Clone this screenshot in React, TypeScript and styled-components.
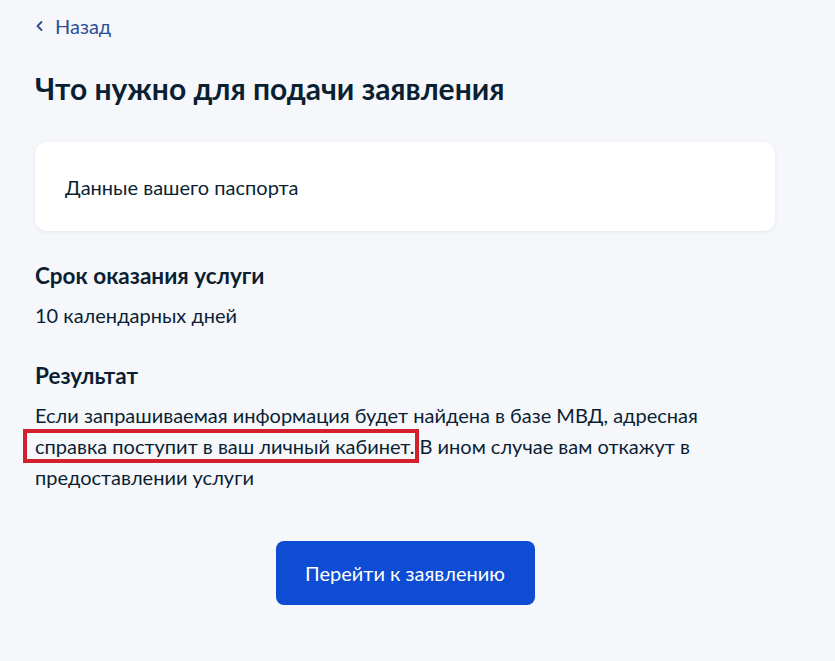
import React from 'react'
import styled, { createGlobalStyle } from 'styled-components'

const GlobalStyle = createGlobalStyle`
    html, body {
        margin: 0;
        padding: 0;
        background: #f5f7fb;
    }
    body {
        font-family: Lato, 'Noto Sans', sans-serif;
        color: #0b1f33;
    }
`

export default function App() {
    return (
        <>
            <GlobalStyle />
            <Page>
                <BackLink href="#">
                    <svg width="10" height="12" viewBox="0 0 10 12" fill="none">
                        <path d="M6.5 2L2.5 6L6.5 10" stroke="currentColor" strokeWidth="1.8" strokeLinecap="round" strokeLinejoin="round" />
                    </svg>
                    Назад
                </BackLink>
                <Title>Что нужно для подачи заявления</Title>
                <Card>Данные вашего паспорта</Card>
                <Section>
                    <SectionTitle>Срок оказания услуги</SectionTitle>
                    <Text>10 календарных дней</Text>
                </Section>
                <Section>
                    <SectionTitle>Результат</SectionTitle>
                    <Text>
                        Если запрашиваемая информация будет найдена в базе МВД, адресная{' '}
                        <Marked>справка поступит в ваш личный кабинет.</Marked> В ином случае вам откажут в
                        предоставлении услуги
                    </Text>
                </Section>
                <Actions>
                    <PrimaryButton>Перейти к заявлению</PrimaryButton>
                </Actions>
            </Page>
        </>
    )
}

const Page = styled.div`
    width: 740px;
    padding: 12px 34px 40px 35px;
    display: flex;
    flex-direction: column;
`

const BackLink = styled.a`
    display: inline-flex;
    align-items: center;
    gap: 10px;
    align-self: flex-start;
    color: #2d4f98;
    font-size: 20px;
    line-height: 28px;
    text-decoration: none;
`

const Title = styled.h1`
    margin: 30px 0 0;
    font-size: 30px;
    line-height: 36px;
    font-weight: 700;
`

const Card = styled.div`
    margin-top: 36px;
    height: 89px;
    box-sizing: border-box;
    padding: 0 30px;
    display: flex;
    align-items: center;
    background: #fff;
    border-radius: 12px;
    box-shadow: 0 1px 4px rgba(102, 125, 163, 0.12);
    font-size: 20px;
`

const Section = styled.section`
    margin-top: 30px;
    display: flex;
    flex-direction: column;
    gap: 9px;
`

const SectionTitle = styled.h2`
    margin: 0;
    font-size: 22.5px;
    line-height: 30px;
    font-weight: 700;
`

const Text = styled.p`
    margin: 0;
    max-width: 700px;
    font-size: 20px;
    line-height: 31px;
`

const Marked = styled.span`
    position: relative;
    white-space: nowrap;
    &::after {
        content: '';
        position: absolute;
        left: -12px;
        right: -5px;
        top: -5px;
        bottom: -5px;
        border: 4px solid #d3202c;
        pointer-events: none;
    }
`

const Actions = styled.div`
    margin-top: 48px;
    display: flex;
    justify-content: center;
`

const PrimaryButton = styled.button`
    width: 259px;
    height: 64px;
    border: none;
    border-radius: 8px;
    background: #0d4cd3;
    color: #fff;
    font-family: Lato, 'Noto Sans', sans-serif;
    font-size: 20px;
    cursor: pointer;
`
